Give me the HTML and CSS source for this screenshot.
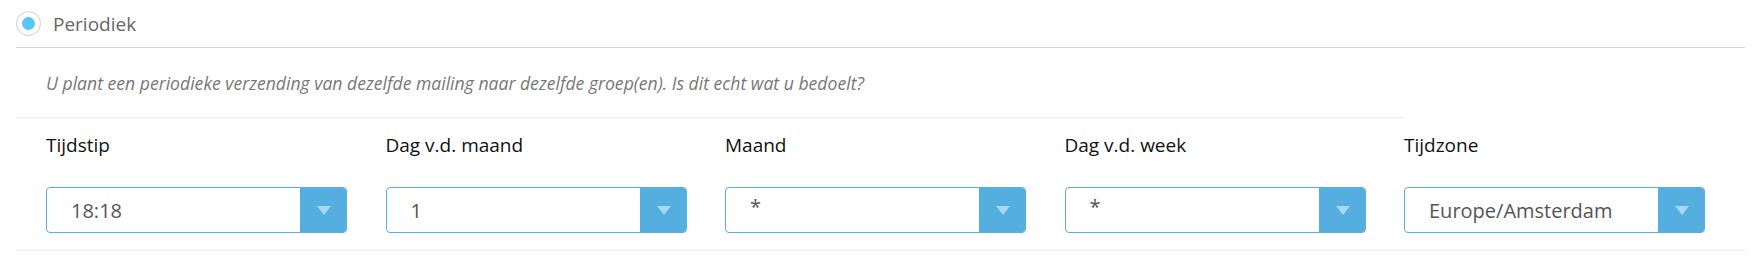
FILE: index.html
```html
<!DOCTYPE html>
<html lang="nl">
<head>
<meta charset="utf-8">
<title>Periodiek</title>
<link rel="stylesheet" href="styles.css">
</head>
<body>
<div class="panel">
  <div class="header">
    <span class="radio"><span class="radio-dot"></span></span>
    <span class="header-label">Periodiek</span>
  </div>
  <div class="help">U plant een periodieke verzending van dezelfde mailing naar dezelfde groep(en). Is dit echt wat u bedoelt?</div>
  <div class="fields">
    <div class="field">
      <div class="field-label">Tijdstip</div>
      <div class="select"><span class="select-value">18:18</span><span class="select-btn"><span class="tri"></span></span></div>
    </div>
    <div class="field">
      <div class="field-label">Dag v.d. maand</div>
      <div class="select"><span class="select-value">1</span><span class="select-btn"><span class="tri"></span></span></div>
    </div>
    <div class="field">
      <div class="field-label">Maand</div>
      <div class="select"><span class="select-value star">*</span><span class="select-btn"><span class="tri"></span></span></div>
    </div>
    <div class="field">
      <div class="field-label">Dag v.d. week</div>
      <div class="select"><span class="select-value star">*</span><span class="select-btn"><span class="tri"></span></span></div>
    </div>
    <div class="field">
      <div class="field-label">Tijdzone</div>
      <div class="select"><span class="select-value">Europe/Amsterdam</span><span class="select-btn"><span class="tri"></span></span></div>
    </div>
  </div>
</div>
</body>
</html>
```
FILE: styles.css
```css
html, body {
  margin: 0;
  padding: 0;
  background: #ffffff;
}
body {
  font-family: "Open Sans", "Liberation Sans", sans-serif;
}
.panel {
  margin-left: 16px;
  width: 1729px;
}
.header {
  height: 47px;
  display: flex;
  align-items: center;
  border-bottom: 1px solid #d2d2d2;
}
.radio {
  width: 23px;
  height: 23px;
  border: 1px solid #cfcfcf;
  border-radius: 50%;
  display: flex;
  align-items: center;
  justify-content: center;
  box-sizing: content-box;
}
.radio-dot {
  width: 13px;
  height: 13px;
  border-radius: 50%;
  background: #5ac3f9;
}
.header-label {
  margin-left: 12px;
  font-size: 19px;
  color: #666666;
}
.help {
  width: 1358px;
  height: 24px;
  padding: 23px 0 22px 30px;
  font-size: 17.6px;
  line-height: 24px;
  font-style: italic;
  color: #777777;
  border-bottom: 1px solid #ececec;
}
.fields {
  display: grid;
  grid-template-columns: repeat(5, 301px);
  column-gap: 38.5px;
  padding: 14px 0 17px 30px;
  border-bottom: 1px solid #ececec;
}
.field-label {
  font-size: 19px;
  color: #111111;
  margin-bottom: 29px;
}
.select {
  height: 46px;
  box-sizing: border-box;
  border: 1px solid #5aaddf;
  border-radius: 4px;
  display: flex;
  overflow: hidden;
}
.select-value {
  flex: 1;
  display: flex;
  align-items: center;
  padding-left: 24px;
  font-size: 20px;
  color: #555555;
}
.select-value.star {
  align-items: flex-start;
  padding-top: 5px;
}
.select-btn {
  width: 46px;
  background: #54aee0;
  display: flex;
  align-items: center;
  justify-content: center;
}
.tri {
  width: 0;
  height: 0;
  border-left: 7px solid transparent;
  border-right: 7px solid transparent;
  border-top: 9px solid #a9d6f0;
  margin-left: 2px;
}
```
